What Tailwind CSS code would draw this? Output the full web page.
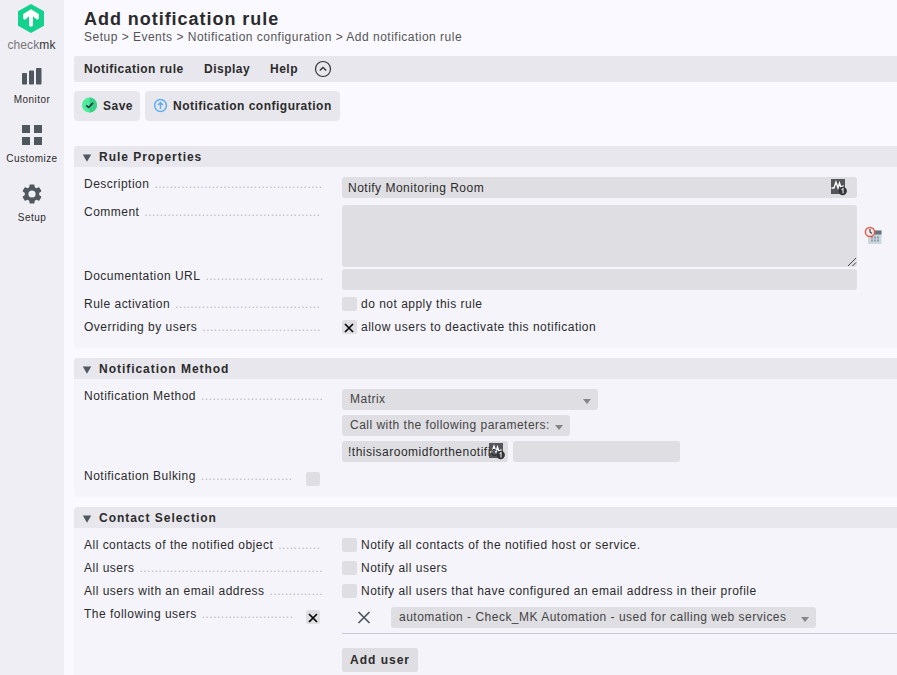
<!DOCTYPE html>
<html lang="en">
<head>
<meta charset="utf-8">
<title>Add notification rule</title>
<script src="https://cdn.jsdelivr.net/npm/@tailwindcss/browser@4"></script>
</head>
<body class="w-[897px] h-[675px] overflow-hidden bg-[#faf9ff] font-['Liberation_Sans',Arial,sans-serif] text-[12px] leading-[14px] tracking-[0.49px] text-[#2b2b2b] flex">
<svg class="hidden">
  <symbol id="pulse" viewBox="0 0 18 18">
    <rect x="1" y="1" width="14" height="15" fill="#55565b"/>
    <path d="M1.500 10H4L6 4L8 10L9.500 5L11 9.500L13.500 7.500" fill="none" stroke="#fff" stroke-width="1.300"/>
    <circle cx="12.700" cy="13" r="4.200" fill="#333438"/>
    <path d="M11.500 11.700L13 10.700V15.500" fill="none" stroke="#d8d8da" stroke-width="1.200"/>
  </symbol>
  <symbol id="cross" viewBox="0 0 10 10"><path d="M1 1L9 9M9 1L1 9" fill="none" stroke="currentColor" stroke-width="1.700"/></symbol>
</svg>

<nav class="w-[64px] h-full shrink-0 bg-[#efeef4] flex flex-col items-center text-[10px] leading-[12px] tracking-[0.45px]">
  <svg class="mt-[4px] -ml-[2px] w-[28px] h-[30px]" viewBox="0 0 28 30">
    <path d="M14 0L27 7.300V21.700L14 29L1 21.700V7.300Z" fill="#15d18e"/>
    <path d="M14 5.200L21.800 9.900V14.800L20 15.800L16 12.300V21.700L14 22.800L12 21.700V12.300L8 15.800L6.200 14.800V9.900Z" fill="#fff"/>
  </svg>
  <div class="mt-[5px] -ml-[1px] text-[12px] leading-[13px] tracking-[0.1px] text-[#777] whitespace-nowrap">check<span class="text-[#333]">mk</span></div>
  <svg class="mt-[16px] w-[20px] h-[17px]" viewBox="0 0 20 17" fill="#4f575f"><rect y="5" width="5" height="11.500" rx=".8"/><rect x="7" y="2.500" width="5" height="14" rx=".8"/><rect x="14" y="0" width="5.500" height="16.500" rx=".8"/></svg>
  <div class="mt-[9px]">Monitor</div>
  <svg class="mt-[19px] w-[20px] h-[20px]" viewBox="0 0 20 20" fill="#4f575f"><path d="M0 0H8V8H0ZM12 0H20V8H12ZM0 12H8V20H0ZM12 12H20V20H12Z"/></svg>
  <div class="mt-[8px]">Customize</div>
  <svg class="mt-[19px] w-[20px] h-[20px]" viewBox="2 2 20 20" fill="#4f575f"><path d="M19.140 12.940c.04-.3.06-.61.06-.94s-.02-.64-.07-.94l2.030-1.580a.49.49 0 0 0 .12-.61l-1.920-3.320a.488.488 0 0 0-.59-.22l-2.390.96c-.5-.38-1.030-.7-1.620-.94l-.36-2.540a.484.484 0 0 0-.48-.41h-3.840c-.24 0-.43.17-.47.41l-.36 2.540c-.59.24-1.130.57-1.620.94l-2.390-.96a.48.48 0 0 0-.59.22L2.740 8.870c-.12.21-.08.47.12.61l2.030 1.580c-.05.3-.09.63-.09.94s.02.64.07.94l-2.030 1.580a.49.49 0 0 0-.12.61l1.920 3.320c.12.22.37.29.59.22l2.390-.96c.5.38 1.030.7 1.620.94l.36 2.540c.05.24.24.41.48.41h3.840c.24 0 .44-.17.47-.41l.36-2.540c.59-.24 1.130-.56 1.620-.94l2.390.96c.22.08.47 0 .59-.22l1.920-3.320a.49.49 0 0 0-.12-.61zM12 15.600A3.600 3.600 0 1 1 12 8.400a3.600 3.600 0 0 1 0 7.200z"/></svg>
  <div class="mt-[8px]">Setup</div>
</nav>

<main class="flex-1 min-w-0 pl-[10px] flex flex-col whitespace-nowrap">
  <header class="h-[56px] shrink-0 pl-[10px] pt-[8px]">
    <h1 class="text-[18px] leading-[22px] font-bold tracking-[0.96px]">Add notification rule</h1>
    <div class="text-[#555]">Setup &gt; Events &gt; Notification configuration &gt; Add notification rule</div>
  </header>
  <div class="h-[26px] shrink-0 bg-[#e8e7ed] rounded-l-[2px] pl-[10px] flex items-center font-bold">
    <span class="w-[120px]">Notification rule</span><span class="w-[66px]">Display</span><span class="w-[44px]">Help</span>
    <svg class="w-[18px] h-[18px]" viewBox="0 0 18 18" fill="none" stroke="#333"><circle cx="9" cy="9" r="7.500" stroke-width="1.200"/><path d="M5.800 10.500L9 7.500L12.200 10.500" stroke-width="1.300"/></svg>
  </div>
  <div class="mt-[9px] h-[30px] shrink-0 flex gap-[5px] font-bold">
    <div class="w-[66px] bg-[#e8e7ed] rounded-[4px] flex items-center pl-[8px]">
      <svg class="w-[16px] h-[16px] -mt-[3px] mr-[5px]" viewBox="0 0 16 16"><circle cx="7.500" cy="8" r="7.500" fill="#4cec9a"/><path d="M7.500 .5a7.500 7.500 0 0 1 0 15Z" fill="#3bd088"/><path d="M4.200 8.300L6.600 10.500L11 5.900" fill="none" stroke="#1f3040" stroke-width="1.600"/></svg>Save</div>
    <div class="w-[195px] bg-[#e8e7ed] rounded-[4px] flex items-center pl-[8px]">
      <svg class="w-[15px] h-[15px] -mt-[2px] mr-[5px]" viewBox="0 0 15 15" fill="none" stroke="#5eaef0"><circle cx="7.500" cy="7.500" r="5.900" stroke-width="1.500"/><path d="M7.500 11V4.500M5 7L7.500 4.500L10 7" stroke-width="1.500"/></svg>Notification configuration</div>
  </div>

  <section class="mt-[25px] h-[202px] shrink-0 bg-[#f5f4fb] rounded-l-[4px]">
    <h2 class="h-[21px] bg-[#e8e7ed] rounded-tl-[4px] flex items-center font-bold tracking-[0.97px]"><svg class="ml-[8px] mr-[7px] mt-[2px] w-[10px] h-[8px]" viewBox="0 0 10 8"><path d="M.8 .5H9.200L5 7.800Z" fill="#4f575f"/></svg>Rule Properties</h2>
    <div class="pl-[10px] pt-[10px] grid grid-cols-[258px_1fr] grid-rows-[28px_64px_28px_23px_23px]">
      <div class="flex gap-[5px]">Description<span class="text-[#bbb9c1]">............................................</span></div>
      <div class="w-[515px] h-[21px] rounded-[3px] bg-[#dfdee3] flex items-center pl-[6px]"><span class="w-[482px]">Notify Monitoring Room</span><svg class="w-[18px] h-[18px] shrink-0 -mt-[1px]"><use href="#pulse"/></svg></div>
      <div class="flex gap-[5px]">Comment<span class="text-[#bbb9c1]">..............................................</span></div>
      <div class="flex"><div class="w-[515px] h-[62px] rounded-[3px] bg-[#dfdee3] flex items-end justify-end"><svg class="w-[10px] h-[10px]" viewBox="0 0 10 10"><path d="M1 9L9 1M5.500 9L9 5.500" stroke="#444" stroke-width="1"/></svg></div>
        <svg class="ml-[7px] mt-[21px] w-[18px] h-[19px]" viewBox="0 0 18 19"><rect x="4" y="4.500" width="13.500" height="13.500" fill="#cbd7dc"/><rect x="4" y="4.500" width="13.500" height="4" fill="#60757f"/><path d="M7 11.500H15M7 14.500H15" stroke="#8ba0a9" stroke-width="1.800" stroke-dasharray="2 1"/><circle cx="6" cy="6" r="4.600" fill="#eee" stroke="#f2574f" stroke-width="1.500"/><path d="M6 3V6L8 7.500" fill="none" stroke="#444" stroke-width="1.200"/></svg></div>
      <div class="flex gap-[5px]">Documentation URL<span class="text-[#bbb9c1]">...............................</span></div>
      <div class="w-[515px] h-[21px] rounded-[3px] bg-[#dfdee3]"></div>
      <div class="flex gap-[5px]">Rule activation<span class="text-[#bbb9c1]">......................................</span></div>
      <div class="flex gap-[4px] h-[14px]"><i class="w-[15px] h-[14px] rounded-[2px] bg-[#dfdee3]"></i>do not apply this rule</div>
      <div class="flex gap-[5px]">Overriding by users<span class="text-[#bbb9c1]">...............................</span></div>
      <div class="flex gap-[4px] h-[14px]"><i class="w-[15px] h-[14px] rounded-[2px] bg-[#dfdee3] flex items-center justify-center text-black"><svg class="w-[10px] h-[10px] mt-[1px] -ml-[1px]"><use href="#cross"/></svg></i>allow users to deactivate this notification</div>
    </div>
  </section>

  <section class="mt-[10px] h-[139px] shrink-0 bg-[#f5f4fb] rounded-l-[4px]">
    <h2 class="h-[21px] bg-[#e8e7ed] rounded-tl-[4px] flex items-center font-bold tracking-[0.97px]"><svg class="ml-[8px] mr-[7px] mt-[2px] w-[10px] h-[8px]" viewBox="0 0 10 8"><path d="M.8 .5H9.200L5 7.800Z" fill="#4f575f"/></svg>Notification Method</h2>
    <div class="pl-[10px] pt-[10px] grid grid-cols-[258px_1fr] grid-rows-[80px_23px]">
      <div class="flex gap-[5px]">Notification Method<span class="text-[#bbb9c1]">................................</span></div>
      <div class="flex flex-col gap-[5px] text-[#444]">
        <div class="w-[256px] h-[21px] rounded-[3px] bg-[#dfdee3] flex justify-between items-center pl-[8px] pr-[7px] pb-[1px]">Matrix<svg class="w-[8px] h-[5px] mt-[5px]" viewBox="0 0 8 5"><path d="M0 0H8L4 5Z" fill="#858489"/></svg></div>
        <div class="w-[228px] h-[21px] rounded-[3px] bg-[#dfdee3] flex justify-between items-center pl-[8px] pr-[7px] pb-[1px]">Call with the following parameters:<svg class="w-[8px] h-[5px] mt-[5px]" viewBox="0 0 8 5"><path d="M0 0H8L4 5Z" fill="#858489"/></svg></div>
        <div class="flex gap-[5px] text-[#2b2b2b]"><div class="relative w-[166px] h-[21px] rounded-[3px] bg-[#dfdee3] flex items-center pl-[6px]"><svg class="absolute left-[146px] top-[1px] w-[18px] h-[18px]"><use href="#pulse"/></svg><span class="relative">!thisisaroomidforthenotific</span></div><div class="w-[167px] h-[21px] rounded-[3px] bg-[#dfdee3]"></div></div>
      </div>
      <div class="w-[236px] flex gap-[5px]">Notification Bulking<span class="text-[#bbb9c1]">........................</span><i class="ml-auto mt-[3px] w-[14px] h-[14px] rounded-[2px] bg-[#dfdee3]"></i></div>
    </div>
  </section>

  <section class="mt-[10px] h-[180px] shrink-0 bg-[#f5f4fb] rounded-l-[4px]">
    <h2 class="h-[21px] bg-[#e8e7ed] rounded-tl-[4px] flex items-center font-bold tracking-[0.97px]"><svg class="ml-[8px] mr-[7px] mt-[2px] w-[10px] h-[8px]" viewBox="0 0 10 8"><path d="M.8 .5H9.200L5 7.800Z" fill="#4f575f"/></svg>Contact Selection</h2>
    <div class="pl-[10px] pt-[10px] grid grid-cols-[258px_1fr] grid-rows-[23px_23px_23px_70px]">
      <div class="flex gap-[5px]">All contacts of the notified object<span class="text-[#bbb9c1]">...........</span></div>
      <div class="flex gap-[4px] h-[14px]"><i class="w-[15px] h-[14px] rounded-[2px] bg-[#dfdee3]"></i>Notify all contacts of the notified host or service.</div>
      <div class="flex gap-[5px]">All users<span class="text-[#bbb9c1]">................................................</span></div>
      <div class="flex gap-[4px] h-[14px]"><i class="w-[15px] h-[14px] rounded-[2px] bg-[#dfdee3]"></i>Notify all users</div>
      <div class="flex gap-[5px]">All users with an email address<span class="text-[#bbb9c1]">..............</span></div>
      <div class="flex gap-[4px] h-[14px]"><i class="w-[15px] h-[14px] rounded-[2px] bg-[#dfdee3]"></i>Notify all users that have configured an email address in their profile</div>
      <div class="w-[236px] flex gap-[5px]">The following users<span class="text-[#bbb9c1]">........................</span><i class="ml-auto mt-[3px] w-[14px] h-[14px] rounded-[2px] bg-[#dfdee3] flex items-center justify-center text-black"><svg class="w-[10px] h-[10px] mt-[1px] -ml-[1px]"><use href="#cross"/></svg></i></div>
      <div>
        <div class="h-[27px] flex border-b border-[#c9c8d4]">
          <svg class="mt-[4px] ml-[15px] w-[14px] h-[13px] text-[#4f575f]" viewBox="0 0 14 13"><path d="M1.500 1L12.500 12M12.500 1L1.500 12" fill="none" stroke="currentColor" stroke-width="1.700"/></svg>
          <div class="ml-[20px] w-[425px] h-[21px] rounded-[3px] bg-[#dfdee3] text-[#444] flex justify-between items-center pl-[8px] pr-[7px] pb-[1px]">automation - Check_MK Automation - used for calling web services<svg class="w-[8px] h-[5px] mt-[5px]" viewBox="0 0 8 5"><path d="M0 0H8L4 5Z" fill="#858489"/></svg></div>
        </div>
        <div class="mt-[14px] w-[76px] h-[24px] rounded-[3px] bg-[#dfdee3] font-bold tracking-[1px] flex items-center pl-[8px]">Add user</div>
      </div>
    </div>
  </section>
</main>
</body>
</html>
